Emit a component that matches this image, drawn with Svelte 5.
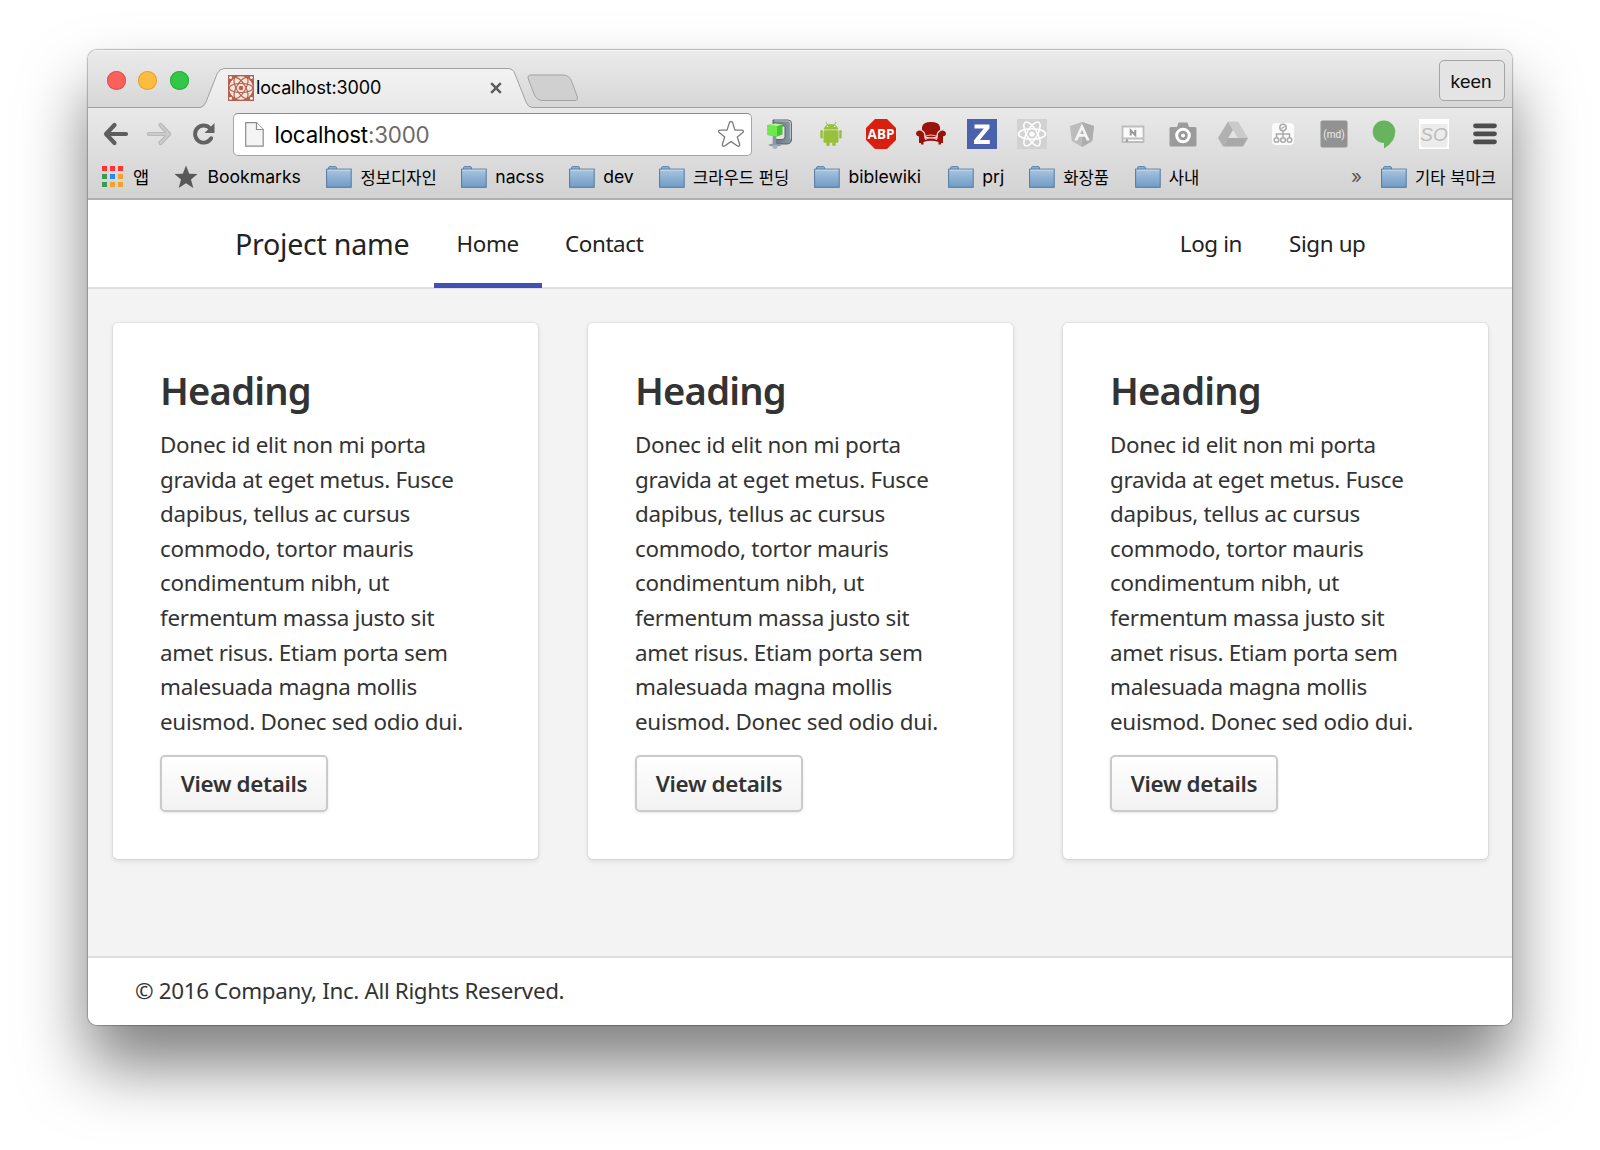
<script>
  const labels = [
    { t: '정보디자인', w: 76, ko: true }, { t: 'nacss', w: 49 }, { t: 'dev', w: 31 },
    { t: '크라우드 펀딩', w: 96.5, ko: true }, { t: 'biblewiki', w: 75 }, { t: 'prj', w: 22 },
    { t: '화장품', w: 46.5, ko: true }, { t: '사내', w: 31, ko: true }
  ];
  const cards = [1, 2, 3];
  const lines = [
    'Donec id elit non mi porta', 'gravida at eget metus. Fusce', 'dapibus, tellus ac cursus',
    'commodo, tortor mauris', 'condimentum nibh, ut', 'fermentum massa justo sit',
    'amet risus. Etiam porta sem', 'malesuada magna mollis', 'euismod. Donec sed odio dui.'
  ];
  const apps = ['#f33', '#f33', '#f33', '#3a9c52', '#2a86f0', '#f2a12c', '#3a9c52', '#f2a12c', '#f2a12c'];
</script>

{#snippet atom(color, sw)}
  <g fill="none" stroke={color} stroke-width={sw}>
    <ellipse cx="15" cy="15" rx="13.5" ry="5.2" />
    <ellipse cx="15" cy="15" rx="13.5" ry="5.2" transform="rotate(60 15 15)" />
    <ellipse cx="15" cy="15" rx="13.5" ry="5.2" transform="rotate(120 15 15)" />
  </g>
  <circle cx="15" cy="15" r="2.6" fill={color} />
{/snippet}

{#snippet folder()}
  <svg class="folder" width="26" height="22" viewBox="0 0 26 22">
    <path d="M2.5 4V1.8Q2.5.6 3.7.6H9.3Q10.5.6 10.5 1.8V4" fill="#8fb2d4" stroke="#5d83a8" />
    <rect x=".6" y="3.1" width="24.6" height="18.2" fill="url(#fold)" stroke="#54799c" />
    <path d="M1.5 4.2H24.5" stroke="#c9dcec" />
  </svg>
{/snippet}

<div class="desktop">
  <svg class="defs" width="0" height="0">
    <defs>
      <linearGradient id="fold" x2="0" y2="1"><stop stop-color="#a9c5e0" /><stop offset="1" stop-color="#6f9cc6" /></linearGradient>
      <linearGradient id="tabfill" x2="0" y2="1"><stop stop-color="#f2f2f2" /><stop offset="1" stop-color="#e9e9e9" /></linearGradient>
      <linearGradient id="clamp" x2="1" y2="0"><stop stop-color="#64727d" /><stop offset="1" stop-color="#8c9aa5" /></linearGradient>
    </defs>
  </svg>
  <div class="window">
    <div class="strip">
      <div class="lights"><i class="red"></i><i class="amber"></i><i class="green"></i></div>
      <div class="tab">
        <svg class="tabshape" width="340" height="41" viewBox="0 0 340 41">
          <path d="M0 39.5H3Q7 39 9 34L20 6Q22.500.5 27 .5H311Q316 .5 318 6L329 34Q331 39 335 39.5H340V41H0Z" fill="url(#tabfill)" />
          <path d="M0 39.5H3Q7 39 9 34L20 6Q22.500.5 27 .5H311Q316 .5 318 6L329 34Q331 39 335 39.5H340" fill="none" stroke="#a0a0a0" />
        </svg>
        <div class="tabrow">
          <svg width="26" height="26" viewBox="0 0 30 30">
            <rect width="30" height="30" fill="#b5604a" />
            <circle cx="15" cy="15" r="13.6" fill="#f3e4df" />
            {@render atom('#b5604a', 1.3)}
            <g fill="#fff"><circle cx="3" cy="3" r="1.7" /><circle cx="27" cy="3" r="1.7" /><circle cx="3" cy="27" r="1.7" /><circle cx="27" cy="27" r="1.7" /></g>
          </svg>
          <span>localhost:3000</span>
          <svg class="close" width="12" height="12" viewBox="0 0 12 12"><path d="M1.2 1.2 10.8 10.8M10.8 1.2 1.2 10.8" stroke="#5b5b5b" stroke-width="2.4" /></svg>
        </div>
      </div>
      <svg class="newtab" width="52" height="28" viewBox="0 0 52 28">
        <path d="M4 1H36Q42 1 44.500 7L50 22Q51.500 26.500 48 26.500H16Q10 26.500 7.500 21L1.300 5Q0 1 4 1Z" fill="#d0d0d0" stroke="#a3a3a3" />
      </svg>
      <div class="user">keen</div>
    </div>

    <div class="chrome">
      <div class="toolbar">
        <svg class="nav back" width="26" height="24" viewBox="0 0 26 24"><path d="M11.500 3 3 12 11.500 21M3.500 12H23" fill="none" stroke="#5e5e5e" stroke-width="4.200" stroke-linecap="round" stroke-linejoin="round" /></svg>
        <svg class="nav fwd" width="26" height="24" viewBox="0 0 26 24"><path d="M14.500 3 23 12 14.500 21M22.500 12H3" fill="none" stroke="#b4b4b4" stroke-width="4.200" stroke-linecap="round" stroke-linejoin="round" /><path d="M14.500 3 23 12 14.500 21M22.500 12H3" fill="none" stroke="#cbcbcb" stroke-width="2.400" stroke-linecap="round" stroke-linejoin="round" /></svg>
        <svg class="nav reload" width="24" height="24" viewBox="0 0 24 24"><path d="M18 6.200A8.600 8.600 0 1 0 19.200 16.200" fill="none" stroke="#626262" stroke-width="3.900" stroke-linecap="round" /><path d="M22.500 1V11H12.500Z" fill="#626262" /></svg>
        <div class="url">
          <svg width="19" height="25" viewBox="0 0 19 25"><path d="M.7.7H11.500L18.200 7.500V24.200H.7Z" fill="#f4f4f4" stroke="#8b8b8b" stroke-width="1.200" /><path d="M11.500.7V7.500H18.200" fill="#fff" stroke="#8b8b8b" stroke-width="1.200" /></svg>
          <span class="addr">localhost<em>:3000</em></span>
          <svg width="28" height="28" viewBox="0 0 28 28"><path d="M14 1.500Q15.200 1.500 15.700 3L18 10.200H25Q27.500 10.800 25.800 12.600L20.300 17 22.600 24.200Q22.800 27 20.500 26L14 21.600 7.500 26Q5.200 27 5.400 24.200L7.700 17 2.200 12.600Q.5 10.800 3 10.200H10L12.300 3Q12.800 1.500 14 1.500Z" fill="#fff" stroke="#7c7c7c" stroke-width="1.300" /></svg>
        </div>
        <div class="exts">
          <svg viewBox="0 0 30 30">
            <path d="M7 1H22Q25.500 1 25.500 4.500V20Q25.500 25 20.500 25H10V20.500H16Q19 20.500 19 17.500V8.500Q19 7 17.500 7H7Z" fill="url(#clamp)" stroke="#586570" /><path d="M8 2H21.500Q24.500 2 24.500 5V20" fill="none" stroke="#bcc8d0" stroke-width="1.200" />
            <path d="M8.500 16V27" stroke="#8796a1" stroke-width="3.600" /><path d="M1.500 6 9 4.500 16.500 5.500V15.500L11 17.500 1.500 16Z" fill="#43c62e" /><path d="M1.500 6 11 7V17.500L1.500 16Z" fill="#72e850" /><path d="M1.500 6 9 4.500 16.500 5.500 11 7Z" fill="#b8f59e" />
            <ellipse cx="9" cy="26" rx="6.500" ry="1.500" fill="#8e9ca6" /><ellipse cx="9" cy="28" rx="2.500" ry="2" fill="#a6b3bc" />
          </svg>
          <svg viewBox="0 0 30 30"><g fill="#97c03d"><path d="M7.500 10.500A7.700 7.200 0 0 1 22.500 10.500Z" /><rect x="7.500" y="11.300" width="15" height="12.500" rx="1.500" /><rect x="4.300" y="11" width="2.500" height="8.500" rx="1.200" /><rect x="23.200" y="11" width="2.500" height="8.500" rx="1.200" /><rect x="10.300" y="20" width="3.400" height="7" rx="1.500" /><rect x="16.300" y="20" width="3.400" height="7" rx="1.500" /></g><path d="M10 3 11.500 6M20 3 18.500 6" stroke="#97c03d" /><circle cx="11.500" cy="7.500" r=".8" fill="#fff" /><circle cx="18.500" cy="7.500" r=".8" fill="#fff" /></svg>
          <svg viewBox="0 0 30 30"><path d="M9 0H21L30 9V21L21 30H9L0 21V9Z" fill="#d9200f" /><text class="abp" x="15" y="20.300">ABP</text></svg>
          <svg viewBox="0 0 30 30"><g fill="#99120b"><path d="M6 12V8Q7 3 15 3T24 8V12Q21 13 20.500 18H9.500Q9 13 6 12Z" /><path d="M3 11.500Q8 11.500 8.500 17V20Q15 17 21.500 20V17Q22 11.500 27 11.500 30 12 30 15 29.500 17 27 17.500V24H25V25.500H22.500V23Q15 20.500 7.500 23V25.500H5V24H3V17.500Q.5 17 0 15 0 12 3 11.500Z" /></g><path d="M5.500 11.500Q9 12.500 9 17.500Q15 14.500 21 17.500 21 12.500 24.500 11.500M9 20.500Q15 17.500 21 20.500" fill="none" stroke="#f0d4d2" stroke-width="1.200" /></svg>
          <svg viewBox="0 0 30 30"><rect width="30" height="30" fill="#4b61ab" /><path d="M7.500 5.500H22.500V9.300L12.800 21H22.800V25H7V21.200L16.800 9.500H7.500Z" fill="#fff" /></svg>
          <svg viewBox="0 0 30 30"><rect width="30" height="30" fill="#d2d2d2" />{@render atom('#fff', 1.5)}</svg>
          <svg viewBox="0 0 30 30"><path d="M15 3 27 7 25.200 22 15 28 4.800 22 3 7Z" fill="#bcbcbc" /><path d="M15 3 27 7 25.200 22 15 28Z" fill="#adadad" /><path d="M7.300 21.500 15 4.500 22.700 21.500H19.600L18 17.800H12L10.400 21.500ZM13.200 15H16.800L15 10.500Z" fill="#f4f4f4" fill-rule="evenodd" /></svg>
          <svg viewBox="0 0 30 30"><path d="M4.500 7.500H25.500V23H4.500Z" fill="#fafafa" stroke="#bdbdbd" stroke-width="1.800" /><path d="M4.500 19.500H25.500" stroke="#bdbdbd" stroke-width="1.800" /><path d="M12.700 16.500V11.500L17.300 16V11" fill="none" stroke="#999" stroke-width="2" /><circle cx="9" cy="21.500" r="1.200" fill="#999" /></svg>
          <svg viewBox="0 0 30 30"><path d="M3 8H9L10.500 3.500H19.500L21 8H27Q28.500 8 28.500 9.500V26Q28.500 27.500 27 27.500H3Q1.500 27.500 1.500 26V9.500Q1.500 8 3 8Z" fill="#9b9b9b" /><circle cx="15" cy="16.500" r="7.800" fill="#fff" /><circle cx="15" cy="16.500" r="4.800" fill="#999" /><circle cx="15" cy="16.500" r="2" fill="#fff" /></svg>
          <svg viewBox="0 0 30 30"><path d="M10 2.500H20L30 19H20Z" fill="#cacaca" /><path d="M10 2.500 15 11 5 27.500 0 19Z" fill="#b1b1b1" /><path d="M10 19H30L25 27.500H5Z" fill="#a9a9a9" /></svg>
          <svg viewBox="0 0 30 30"><rect x="4" y="4" width="22" height="22" rx="4" fill="#fbfbfb" /><g fill="none" stroke="#aaa" stroke-width="1.500"><circle cx="15" cy="8.500" r="3.200" /><circle cx="8.500" cy="21" r="2.300" /><circle cx="15" cy="21" r="2.300" /><circle cx="21.500" cy="21" r="2.300" /><path d="M15 12V18.500M8.500 18.500V15H21.500V18.500M13.500 9.500 16.500 7.500" /></g></svg>
          <svg viewBox="0 0 30 30"><rect x="1.500" y="1.500" width="27" height="27" rx="2" fill="#929292" /><text class="md" x="15" y="18.500">(md)</text></svg>
          <svg viewBox="0 0 30 30"><path d="M15 1.500A11.300 11.300 0 0 1 26.300 13Q26 23 15 29.500V24.100A11.300 11.300 0 0 1 15 1.500Z" fill="#68b35d" /></svg>
          <svg viewBox="0 0 30 30"><rect width="30" height="30" fill="#fff" /><path d="M1.500 5H28.500V25Q28.500 28.500 25 28.500H5Q1.500 28.500 1.500 25Z" fill="#ececec" /><text class="so" x="15" y="22">SO</text></svg>
          <svg viewBox="0 0 30 30"><path d="M5.500 6.800H24.500M5.500 14.800H24.500M5.500 22.800H24.500" stroke="#4d4d4d" stroke-width="4.800" stroke-linecap="round" /></svg>
        </div>
      </div>
      <div class="bookmarks">
        <svg class="apps" width="22" height="22" viewBox="0 0 22 22">
          {#each apps as c, i}<rect x={(i % 3) * 8} y={Math.floor(i / 3) * 8} width="5" height="5" fill={c} />{/each}
        </svg>
        <span class="ko applabel">앱</span>
        <svg class="fav" width="24" height="24" viewBox="0 0 24 24"><path d="M12 .5 15.200 8.700 23.500 9 17 14.500 19.300 23 12 18.300 4.700 23 7 14.500.5 9 8.800 8.700Z" fill="#585858" /></svg>
        <span class="bm">Bookmarks</span>
        {#each labels as l}
          <div class="mark">{@render folder()}<span class:ko={l.ko} style:width="{l.w}px">{l.t}</span></div>
        {/each}
        <span class="more">»</span>
        <div class="mark other">{@render folder()}<span class="ko">기타 북마크</span></div>
      </div>
    </div>

    <header>
      <a class="brand" href="#home">Project name</a>
      <a class="item active" href="#home">Home</a>
      <a class="item" href="#contact">Contact</a>
      <a class="item login" href="#login">Log in</a>
      <a class="item" href="#signup">Sign up</a>
    </header>
    <main>
      {#each cards as card (card)}
        <section>
          <h2>Heading</h2>
          <p>{#each lines as line}{line}<br />{/each}</p>
          <button>View details</button>
        </section>
      {/each}
    </main>
    <footer>© 2016 Company, Inc. All Rights Reserved.</footer>
  </div>
</div>

<style>
  :global(body) { margin: 0; background: #fff; }
  * { box-sizing: border-box; }
  svg { display: block; flex: none; }
  .defs { position: absolute; }
  .desktop { width: 1600px; height: 1150px; padding: 50px 88px 125px; overflow: hidden; background: #fff; }
  .window {
    width: 1424px; height: 975px; border-radius: 9px; display: flex; flex-direction: column; overflow: hidden;
    background: #f3f3f3; font-family: Inter, "Noto Sans CJK KR", sans-serif; color: #111;
    box-shadow: 0 0 1px 1px rgba(0,0,0,.25), 0 41px 66px rgba(0,0,0,.5);
  }
  .strip { height: 58px; flex: none; display: flex; background: linear-gradient(#ebebeb, #d6d6d6); box-shadow: inset 0 1px #f6f6f6, inset 0 -1px #a0a0a0; }
  .lights { display: flex; gap: 12.500px; padding: 21px 0 0 18.500px; width: 109px; }
  .lights i { width: 19px; height: 19px; border-radius: 50%; flex: none; }
  .red { background: #fc605b; box-shadow: inset 0 0 0 1px #e2504b; }
  .amber { background: #fdbc40; box-shadow: inset 0 0 0 1px #e0a236; }
  .green { background: #33c748; box-shadow: inset 0 0 0 1px #2aad3b; }
  .tab { width: 340px; height: 41px; margin-top: 18px; display: grid; flex: none; }
  .tabshape, .tabrow { grid-area: 1 / 1; }
  .tabrow { display: flex; align-items: center; padding: 0 25px 2px 30.500px; height: 41px; font-size: 18px; z-index: 1; }
  .tabrow span { margin-left: 2.500px; width: 234px; letter-spacing: -.15px; white-space: nowrap; color: #000; }
  .newtab { margin: 24px 0 0 -10px; }
  .user { margin: 10px 7px 0 auto; width: 66px; height: 41px; border: 1px solid #a4a4a4; border-radius: 5px; font: 19px/41px "Liberation Sans", Arial, sans-serif; text-align: center; padding-right: 2px; background: #e4e4e4; color: #111; }
  .chrome { height: 92px; flex: none; background: linear-gradient(#e9e9e9, #d2d2d2); border-bottom: 2px solid #b0b0b0; }
  .toolbar { height: 52px; display: flex; align-items: center; }
  .back { margin-left: 15px; }
  .fwd { margin-left: 17px; }
  .reload { margin-left: 20px; }
  .url { margin-left: 16.500px; width: 519px; height: 43px; background: #fff; border: 1px solid #a5a5a5; border-top-color: #8c8c8c; border-radius: 5px; display: flex; align-items: center; padding: 0 6px 0 11px; }
  .addr { margin-left: 11px; flex: 1; font-size: 22.300px; color: #000; letter-spacing: -.2px; }
  .addr em { font-style: normal; color: #6a6a6a; }
  .exts { display: flex; gap: 20.300px; margin-left: 14px; }
  .exts svg { width: 30px; height: 30px; }
  .abp { font: bold 13.500px "Open Sans", sans-serif; fill: #fff; text-anchor: middle; }
  .md { font: 10px Roboto, sans-serif; fill: #eee; text-anchor: middle; }
  .so { font: italic 19px "Liberation Sans", Arial, sans-serif; fill: #bdbdbd; text-anchor: middle; }
  .bookmarks { height: 38px; display: flex; align-items: center; padding: 0 16px 5px 14px; font-size: 17.600px; white-space: nowrap; color: #000; }
  .applabel { margin-left: 9px; width: 18px; font-weight: 400; }
  .fav { margin-left: 22.500px; }
  .bm { margin-left: 10px; width: 94px; }
  .mark { display: flex; align-items: center; gap: 8px; margin-left: 24.900px; }
  .mark span { font-size: 17.600px; }
  .mark .ko { font-size: 16.600px; font-weight: 400; }
  .more { margin-left: auto; color: #555; font-size: 19px; }
  .mark.other { margin-left: 19px; }

  header { height: 89px; flex: none; background: #fff; border-bottom: 2px solid #dfdfdf; display: flex; font-family: "Noto Sans", sans-serif; padding: 0 123px; }
  header a { color: #222; text-decoration: none; line-height: 88px; height: 88px; white-space: nowrap; }
  .brand { font-size: 28.600px; padding: 0 24px; width: 222.500px; letter-spacing: -.25px; }
  .item { font-size: 22.400px; padding: 0 23.500px; letter-spacing: -.38px; }
  .active { width: 108px; padding: 0 23px; box-shadow: inset 0 -5px #3f51b5; }
  .login { margin-left: auto; }
  main { flex: 1; display: grid; grid-template-columns: repeat(3, 425px); gap: 50px; padding: 34px 0 0 24.500px; align-items: start; font-family: "Noto Sans", sans-serif; color: #333; }
  section { height: 536px; background: #fff; border-radius: 5px; padding: 45px 46px 46px 47.500px; box-shadow: 0 0 0 1px rgba(0,0,0,.05), 0 2px 4px 1px rgba(0,0,0,.08); }
  h2 { margin: 0; font-size: 38.200px; line-height: 45px; font-weight: 600; letter-spacing: -.8px; }
  p { margin: 15.300px 0 0; font-size: 22.400px; line-height: 34.550px; white-space: nowrap; letter-spacing: -.28px; }
  button { display: block; margin: 15.700px 0 0 0; width: 168px; height: 57px; border: 2px solid #cacaca; border-radius: 5px; background: linear-gradient(#fff, #f2f2f2); color: #333; font: 600 22.400px "Noto Sans", sans-serif; padding: 0; white-space: nowrap; letter-spacing: -.35px; box-shadow: 0 1px 3px rgba(0,0,0,.1); }
  footer { height: 69px; flex: none; background: #fff; border-top: 2px solid #dedede; padding-left: 47px; font: 22.400px/65px "Noto Sans", sans-serif; letter-spacing: -.34px; color: #333; }
</style>
